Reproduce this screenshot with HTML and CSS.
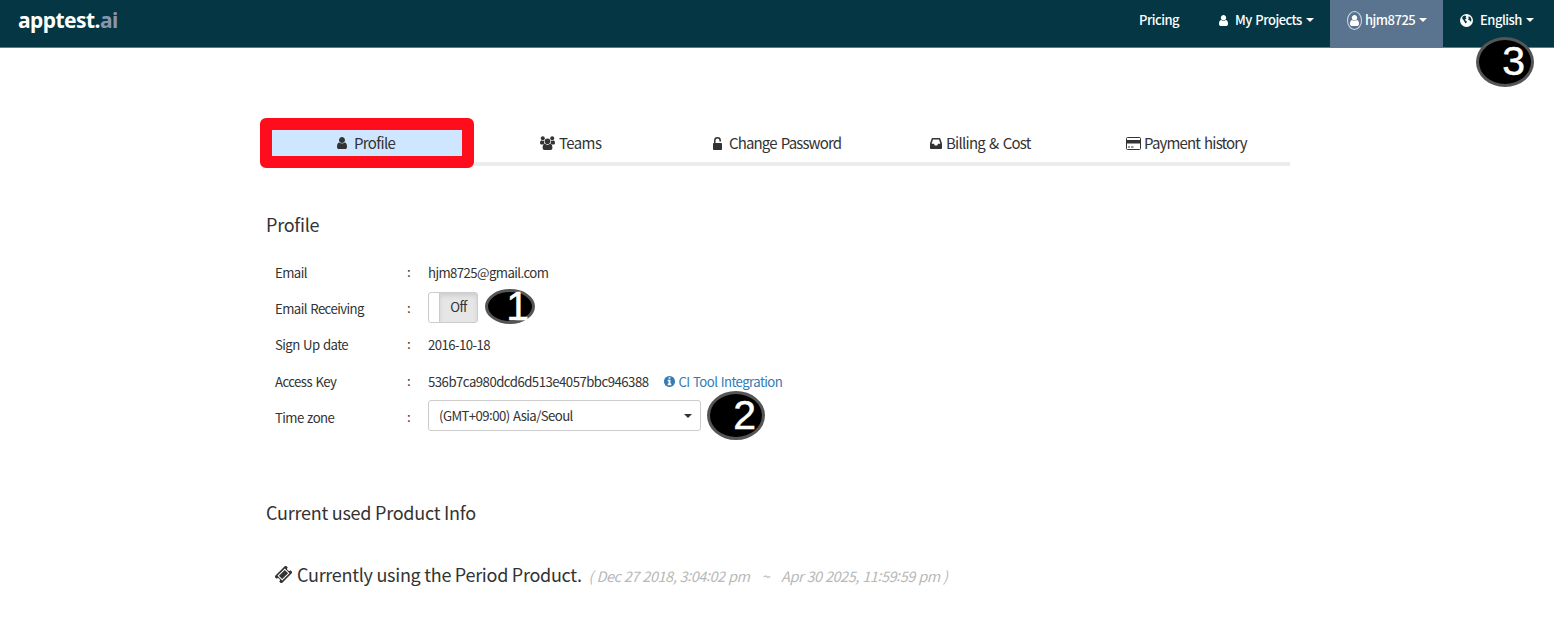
FILE: index.html
```
<!DOCTYPE html>
<html lang="en">
<head>
<meta charset="utf-8">
<title>apptest.ai - Profile</title>
<link rel="stylesheet" href="styles.css">
</head>
<body>
<svg class="defs" aria-hidden="true">
  <symbol id="user" viewBox="256 128 1280 1536"><path d="M1536 1399q0 109-62.500 187t-150.500 78h-854q-88 0-150.500-78t-62.500-187q0-85 8.500-160.500t31.500-152 58.500-131 94-89 134.500-34.500q131 128 313 128t313-128q76 0 134.500 34.500t94 89 58.500 131 31.500 152 8.500 160.500zm-256-887q0 159-112.500 271.500t-271.500 112.500-271.500-112.500-112.500-271.500 112.500-271.500 271.500-112.500 271.500 112.500 112.500 271.500z"/></symbol>
  <symbol id="info" viewBox="128 128 1536 1536"><path d="M1152 1376v-160q0-14-9-23t-23-9h-96v-512q0-14-9-23t-23-9h-320q-14 0-23 9t-9 23v160q0 14 9 23t23 9h96v320h-96q-14 0-23 9t-9 23v160q0 14 9 23t23 9h448q14 0 23-9t9-23zm-128-896v-160q0-14-9-23t-23-9h-192q-14 0-23 9t-9 23v160q0 14 9 23t23 9h192q14 0 23-9t9-23zm640 416q0 209-103 385.500t-279.500 279.500-385.500 103-385.500-103-279.500-279.500-103-385.500 103-385.500 279.500-279.500 385.500-103 385.500 103 279.500 279.500 103 385.500z"/></symbol>
</svg>

<header class="navbar">
  <a class="brand">apptest.<span class="brand-tld">ai</span></a>
  <nav class="menu">
    <a class="menu-item pricing">Pricing</a>
    <a class="menu-item projects"><svg class="icon-user"><use href="#user"/></svg><span>My Projects</span><i class="caret"></i></a>
    <a class="menu-item account"><span class="avatar"><svg class="icon-user"><use href="#user"/></svg></span><span>hjm8725</span><i class="caret"></i></a>
    <a class="menu-item language">
      <svg class="icon-globe" viewBox="0 0 13 13"><circle cx="6.500" cy="6.500" r="6.500" fill="#fff"/><path class="land" d="M3 2.200 5 1.600 6.300 2.400 5.600 3.700 6.600 4.200 5.200 5.400 4.800 6 5.600 6.600 6.800 7.300 6.600 8.600 5.700 9.600 4.900 8.400 3.600 6.300 2.400 5 2.200 3.600zM8.600 2.200 10.800 3.400 11.400 5.400 11.200 7.200 10.300 7.600 9.600 6.200 8.300 5.900 8.200 4.800 9.300 4.200 8.300 3.400z"/></svg>
      <span>English</span><i class="caret"></i><b class="marker marker-3">3</b></a>
  </nav>
</header>

<main class="page">
  <nav class="tabs">
    <a class="tab tab-active"><svg class="tab-user"><use href="#user"/></svg><span>Profile</span></a>
    <a class="tab tab-teams"><svg class="tab-icon" width="15" height="14" viewBox="0 0 15 14"><circle cx="2.800" cy="2.300" r="2"/><circle cx="12.200" cy="2.300" r="2"/><path d="M1.200 4.300q1.500 1 3 .2-.6 2 .4 3.200-1.100 0-1.800.8H1.400Q0 8.500 0 7q0-2.300 1.200-2.700zM13.800 4.300q-1.500 1-3 .2.600 2-.4 3.200 1.100 0 1.800.8h1.400Q15 8.500 15 7q0-2.300-1.200-2.700z"/><circle cx="7.500" cy="5.200" r="2.800"/><path d="M5 7.800q2.500 2 5 0 2.400.1 2.400 4.100 0 2.100-1.800 2.100H4.400q-1.800 0-1.800-2.100 0-4 2.400-4.100z"/></svg><span>Teams</span></a>
    <a class="tab tab-password"><svg class="tab-icon" width="9" height="13" viewBox="0 0 9 13"><path d="M1.800 6.500V3.500a2.700 2.700 0 0 1 5.400 0v1" fill="none" stroke="#333" stroke-width="1.500"/><rect y="6" width="9" height="7" rx=".8"/></svg><span>Change Password</span></a>
    <a class="tab tab-billing"><svg class="tab-icon" width="12" height="11" viewBox="0 0 12 11"><path fill-rule="evenodd" d="M2.500 0h7q.6 0 .8.600L12 5.500V10q0 1-.8 1H.8Q0 11 0 10V5.500L1.700.6Q1.900 0 2.500 0zM3 1.600 1.600 5.800H4l.8 1.600h2.400L8 5.800h2.400L9 1.600z"/></svg><span>Billing &amp; Cost</span></a>
    <a class="tab tab-payment"><svg class="tab-icon" width="15" height="13" viewBox="0 0 15 13"><rect x=".5" y=".5" width="14" height="12" rx="1" fill="none" stroke="#333"/><path d="M1 3h13v3.500H1zM2 9.500h2v1H2zM5 9.500h2.500v1H5z"/></svg><span>Payment history</span></a>
  </nav>

  <section class="section">
    <h2 class="heading">Profile</h2>
    <dl class="details">
      <div class="row"><dt>Email</dt><dd class="colon">:</dd><dd class="value">hjm8725@gmail.com</dd></div>
      <div class="row"><dt>Email Receiving</dt><dd class="colon">:</dd><dd class="value"><span class="toggle"><span class="toggle-off">Off</span></span><b class="marker marker-1">1</b></dd></div>
      <div class="row"><dt>Sign Up date</dt><dd class="colon">:</dd><dd class="value">2016-10-18</dd></div>
      <div class="row"><dt>Access Key</dt><dd class="colon">:</dd><dd class="value"><span class="key">536b7ca980dcd6d513e4057bbc946388</span><a class="link"><svg class="icon-info"><use href="#info"/></svg><span>CI Tool Integration</span></a></dd></div>
      <div class="row"><dt>Time zone</dt><dd class="colon">:</dd><dd class="value"><span class="select"><span>(GMT+09<span class="raised">:</span>00) Asia/Seoul</span><i class="caret"></i></span><b class="marker marker-2">2</b></dd></div>
    </dl>
  </section>

  <section class="section product">
    <h2 class="heading">Current used Product Info</h2>
    <p class="plan"><svg class="icon-ticket" viewBox="0 0 17 17"><g transform="rotate(-45 8.500 8.500)"><path fill-rule="evenodd" d="M.5 3.500h16v3a2 2 0 0 0 0 4v3H.5v-3a2 2 0 0 0 0-4zM3.300 5.200v6.600h10.400V5.200z"/><path d="M4.300 6.200h8.400v4.600H4.300z"/></g></svg><span>Currently using the Period Product.</span><em class="period"><span>( Dec 27 2018, 3<span class="raised">:</span>04<span class="raised">:</span>02 pm</span><span class="tilde">~</span><span>Apr 30 2025, 11<span class="raised">:</span>59<span class="raised">:</span>59 pm )</span></em></p>
  </section>
</main>
</body>
</html>
```

FILE: styles.css
```
* { box-sizing: border-box; }
body {
  margin: 0;
  background: #fff;
  color: #333;
  font: 13.2px/20px "Noto Sans CJK KR", "Noto Sans", sans-serif;
  letter-spacing: -.58px;
  word-spacing: 1px;
}
.defs { position: absolute; width: 0; height: 0; }
svg { flex: none; fill: currentColor; }

.navbar {
  display: flex;
  justify-content: space-between;
  height: 48px;
  border-bottom: 1px solid #5b7c88;
  background: #043644;
  color: #fff;
}
.brand {
  padding: 5px 0 0 18px;
  font: bold 21px/30px "Noto Sans", sans-serif;
  letter-spacing: -.55px;
}
.brand-tld { color: #8795ad; }
.menu { display: flex; font-size: 13px; font-weight: 500; letter-spacing: -.5px; }
.menu-item {
  position: relative;
  display: flex;
  align-items: center;
  height: 47px;
  padding-bottom: 7px;
  white-space: nowrap;
}
.pricing { width: 80px; }
.projects { width: 111px; }
.account { width: 113px; padding-left: 17px; background: #5a738e; }
.language { width: 111px; padding-left: 17px; }
.icon-user { width: 9px; height: 11px; }
.projects .icon-user { margin-right: 7px; }
.avatar {
  display: flex;
  align-items: center;
  justify-content: center;
  width: 15px;
  height: 19px;
  margin-right: 3px;
  border: 1px solid #d5dce3;
  border-radius: 50%;
}
.icon-globe { width: 13px; height: 13px; margin-right: 7px; }
.land { fill: #043644; }
.caret {
  flex: none;
  margin-left: 4px;
  border: 4px solid transparent;
  border-top-color: currentColor;
  border-bottom: 0;
}

.marker {
  position: absolute;
  display: flex;
  justify-content: flex-end;
  align-items: center;
  border: 3px solid #555;
  border-radius: 50%;
  background: #000;
  color: #fff;
  font: 41px/40px "Liberation Sans", Arial, sans-serif;
  letter-spacing: 0;
  -webkit-text-stroke: .5px #fff;
}
.marker-1 { left: 57px; top: -7px; width: 50px; height: 35px; padding: 0 3px 0 0; }
.marker-2 { left: 279px; top: -13px; width: 58px; height: 49px; padding: 0 6px 1px 0; }
.marker-3 { left: 33px; top: 37px; width: 58px; height: 50px; padding: 0 6px 2px 0; }

.page { width: 1030px; margin: 70px 0 0 260px; }
.tabs {
  display: flex;
  height: 50px;
  font-size: 15px;
  word-spacing: 1.5px;
  background: linear-gradient(#ececec, #ececec) 0 44px / 100% 4px no-repeat;
}
.tab { display: flex; align-items: center; white-space: nowrap; }
.tab-active {
  width: 214px;
  padding-left: 65px;
  border: 12px solid #ff0d1d;
  border-radius: 6px;
  background: #cee6ff;
  background-clip: padding-box;
  letter-spacing: -.66px;
}
.tab-user { width: 10px; height: 12px; margin-right: 7px; }
.tab-icon { margin-right: 4px; }
.tab-teams { width: 173px; padding-left: 66px; letter-spacing: -.6px; }
.tab-password { width: 218px; padding-left: 66px; letter-spacing: -.85px; }
.tab-password .tab-icon { margin-right: 7px; }
.tab-billing { width: 196px; padding-left: 65px; letter-spacing: -.75px; }
.tab-payment { padding-left: 65px; letter-spacing: -.85px; }
.tab-payment .tab-icon { margin-right: 3px; }

.section { padding-left: 6px; }
.heading { margin: 41px 0 0; font-weight: 400; font-size: 18px; line-height: 30px; letter-spacing: -.25px; word-spacing: 0; }
.details { margin: 16px 0 0 9px; }
.row { display: flex; align-items: center; height: 36.2px; }
.row dt { width: 132px; }
.row dd { margin: 0; }
.row .colon { width: 21px; padding-bottom: 2px; }
.value { position: relative; display: flex; align-items: center; white-space: nowrap; }
.toggle {
  width: 50px;
  height: 31px;
  margin-top: -4px;
  padding-left: 10px;
  border: 1px solid #ccc;
  border-radius: 3px;
  background: #fff;
}
.toggle-off {
  display: block;
  height: 29px;
  border-left: 1px solid #ccc;
  background: #e6e6e6;
  box-shadow: inset 0 3px 4px rgba(0, 0, 0, .1);
  line-height: 28px;
  text-align: center;
}
.key { letter-spacing: -.52px; }
.link { display: flex; align-items: center; margin-left: 16px; color: #337ab7; }
.icon-info { width: 11px; height: 11px; margin-right: 3px; }
.select {
  display: flex;
  align-items: center;
  justify-content: space-between;
  width: 273px;
  height: 31px;
  margin-top: -4px;
  padding: 0 8px 0 10px;
  border: 1px solid #ccc;
  border-radius: 3px;
}
.raised { vertical-align: 1.5px; line-height: 0; }
.product .heading { margin-top: 61px; }
.plan { display: flex; align-items: center; margin: 32px 0 0 9px; height: 30px; font-size: 18px; letter-spacing: -.28px; word-spacing: 0; white-space: nowrap; }
.icon-ticket { width: 17px; height: 17px; margin: 2px 5px 0 0; }
.period { margin-left: 7px; padding-top: 4px; color: #b8b8b8; font-size: 14.5px; letter-spacing: -.47px; word-spacing: .6px; }
.tilde { margin: 0 12px; }
```
